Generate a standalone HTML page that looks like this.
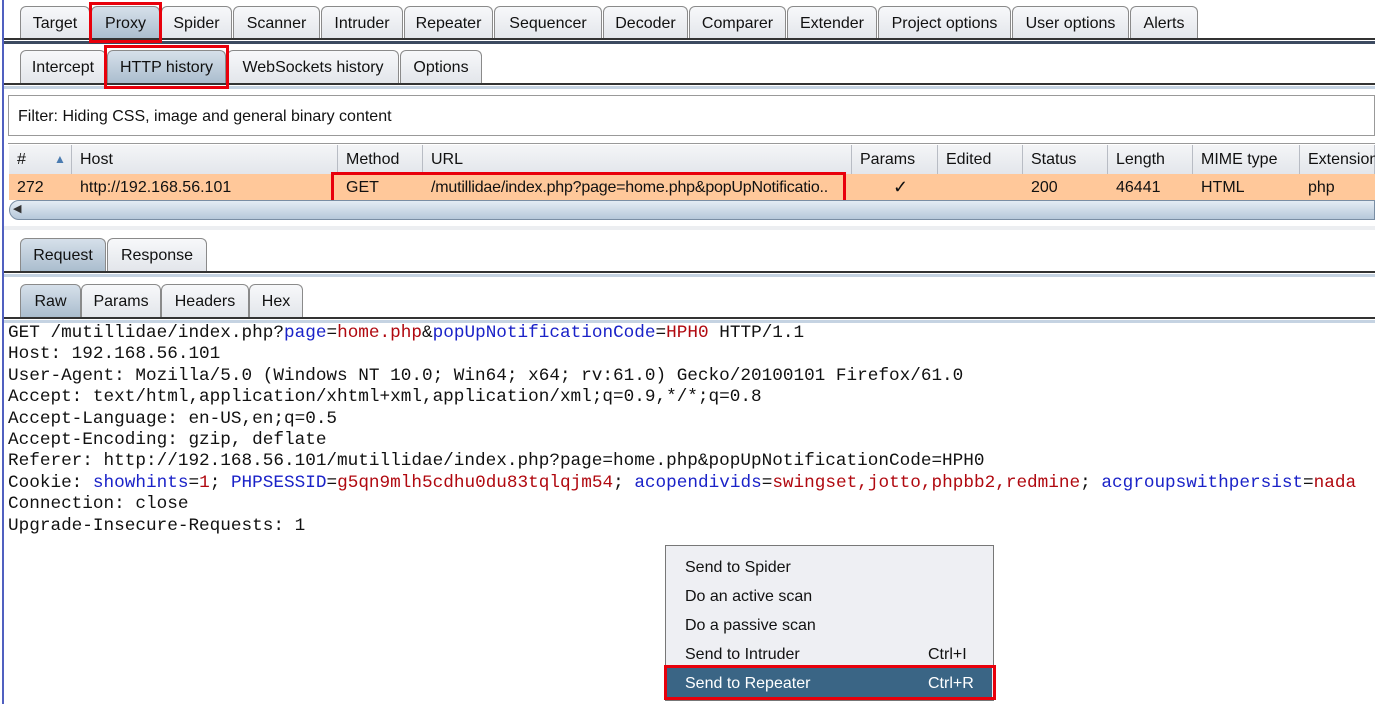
<!DOCTYPE html>
<html><head><style>
body{margin:0;width:1375px;height:704px;background:#fff;position:relative;overflow:hidden;font-family:"Liberation Sans",sans-serif;font-size:16px;color:#111}
.a{position:absolute;box-sizing:border-box}
.tab{position:absolute;box-sizing:border-box;border:1px solid #8a8a8a;border-bottom:none;border-radius:6px 6px 0 0;background:linear-gradient(#f7f8fa,#e2e5ea);text-align:center;line-height:33px}
.sel{background:linear-gradient(#d6e0ea,#a9bccd)}
.red{position:absolute;box-sizing:border-box;border:3px solid #e8000b}
.hd{position:absolute;top:145px;height:29px;line-height:29px;padding-left:8px;box-sizing:border-box;border-right:1px solid #b8bcc4;background:linear-gradient(#f4f5f7,#e3e6eb)}
.rc{position:absolute;top:174px;height:26px;line-height:27px;padding-left:8px;box-sizing:border-box}
.mono{position:absolute;left:8px;top:323px;font-family:"Liberation Mono",monospace;font-size:17.7px;line-height:21.4px;white-space:pre;color:#111}
.b{color:#1a22c8}.r{color:#b0080f}
.mi{position:absolute;left:685px;font-size:16px}
</style></head><body>
<div class="a" style="left:2px;top:0;width:2px;height:704px;background:#5060c0"></div>
<div class="tab" style="left:20px;top:6px;width:70px;height:34px">Target</div>
<div class="tab sel" style="left:91px;top:6px;width:69px;height:34px">Proxy</div>
<div class="tab" style="left:161px;top:6px;width:71px;height:34px">Spider</div>
<div class="tab" style="left:233px;top:6px;width:87px;height:34px">Scanner</div>
<div class="tab" style="left:321px;top:6px;width:82px;height:34px">Intruder</div>
<div class="tab" style="left:404px;top:6px;width:89px;height:34px">Repeater</div>
<div class="tab" style="left:494px;top:6px;width:108px;height:34px">Sequencer</div>
<div class="tab" style="left:603px;top:6px;width:85px;height:34px">Decoder</div>
<div class="tab" style="left:689px;top:6px;width:97px;height:34px">Comparer</div>
<div class="tab" style="left:787px;top:6px;width:90px;height:34px">Extender</div>
<div class="tab" style="left:878px;top:6px;width:133px;height:34px">Project options</div>
<div class="tab" style="left:1012px;top:6px;width:117px;height:34px">User options</div>
<div class="tab" style="left:1130px;top:6px;width:68px;height:34px">Alerts</div>
<div class="a" style="left:4px;top:38px;width:1371px;height:2px;background:#333"></div>
<div class="a" style="left:4px;top:41px;width:1371px;height:3px;background:#3c4a60"></div>
<div class="red" style="left:89px;top:2px;width:73px;height:41px"></div>
<div class="tab" style="left:20px;top:50px;width:86px;height:34px">Intercept</div>
<div class="tab sel" style="left:107px;top:50px;width:119px;height:34px">HTTP history</div>
<div class="tab" style="left:227px;top:50px;width:172px;height:34px">WebSockets history</div>
<div class="tab" style="left:400px;top:50px;width:82px;height:34px">Options</div>
<div class="a" style="left:4px;top:83px;width:1371px;height:2px;background:#333"></div>
<div class="a" style="left:4px;top:86px;width:1371px;height:3px;background:#c5d3e2"></div>
<div class="red" style="left:104px;top:45px;width:125px;height:44px"></div>
<div class="a" style="left:8px;top:95px;width:1367px;height:41px;border:1px solid #999;padding-left:9px;line-height:41px">Filter: Hiding CSS, image and general binary content</div>
<div class="a" style="left:8px;top:143px;width:1367px;height:80px;border-top:1px solid #999"></div>
<div class="hd" style="left:9px;width:63px">#<span style="position:absolute;left:45px;color:#4a7bb0;font-size:12px">▲</span></div>
<div class="hd" style="left:72px;width:266px">Host</div>
<div class="hd" style="left:338px;width:85px">Method</div>
<div class="hd" style="left:423px;width:429px">URL</div>
<div class="hd" style="left:852px;width:86px">Params</div>
<div class="hd" style="left:938px;width:85px">Edited</div>
<div class="hd" style="left:1023px;width:85px">Status</div>
<div class="hd" style="left:1108px;width:85px">Length</div>
<div class="hd" style="left:1193px;width:107px">MIME type</div>
<div class="hd" style="left:1300px;width:75px">Extension</div>
<div class="a" style="left:9px;top:174px;width:1366px;height:26px;background:#ffc89a"></div>
<div class="rc" style="left:9px">272</div>
<div class="rc" style="left:72px">http://192.168.56.101</div>
<div class="rc" style="left:338px">GET</div>
<div class="rc" style="left:423px;width:422px;white-space:nowrap;overflow:hidden;letter-spacing:-0.2px">/mutillidae/index.php?page=home.php&amp;popUpNotificatio..</div>
<div class="rc" style="left:885px;font-size:18px">✓</div>
<div class="rc" style="left:1023px">200</div>
<div class="rc" style="left:1108px">46441</div>
<div class="rc" style="left:1193px">HTML</div>
<div class="rc" style="left:1300px">php</div>
<div class="red" style="left:331px;top:172px;width:515px;height:32px"></div>
<div class="a" style="left:9px;top:200px;width:1366px;height:20px;background:linear-gradient(#e4ecf4,#b6c8da);border-radius:10px 0 0 10px;border:1px solid #7a8ea4"></div>
<div class="a" style="left:13px;top:202px;font-size:11px;color:#333">◀</div>
<div class="a" style="left:4px;top:226px;width:1371px;height:4px;background:#eceef1"></div>
<div class="tab sel" style="left:20px;top:238px;width:86px;height:34px">Request</div>
<div class="tab" style="left:107px;top:238px;width:100px;height:34px">Response</div>
<div class="a" style="left:4px;top:271px;width:1371px;height:2px;background:#333"></div>
<div class="a" style="left:4px;top:274px;width:1371px;height:3px;background:#c5d3e2"></div>
<div class="tab sel" style="left:20px;top:284px;width:61px;height:34px">Raw</div>
<div class="tab" style="left:81px;top:284px;width:80px;height:34px">Params</div>
<div class="tab" style="left:161px;top:284px;width:88px;height:34px">Headers</div>
<div class="tab" style="left:249px;top:284px;width:54px;height:34px">Hex</div>
<div class="a" style="left:4px;top:317px;width:1371px;height:2px;background:#333"></div>
<div class="a" style="left:4px;top:320px;width:1371px;height:3px;background:#c5d3e2"></div>
<div class="mono">GET /mutillidae/index.php?<span class="b">page</span>=<span class="r">home.php</span>&amp;<span class="b">popUpNotificationCode</span>=<span class="r">HPH0</span> HTTP/1.1
Host: 192.168.56.101
User-Agent: Mozilla/5.0 (Windows NT 10.0; Win64; x64; rv:61.0) Gecko/20100101 Firefox/61.0
Accept: text/html,application/xhtml+xml,application/xml;q=0.9,*/*;q=0.8
Accept-Language: en-US,en;q=0.5
Accept-Encoding: gzip, deflate
Referer: http://192.168.56.101/mutillidae/index.php?page=home.php&amp;popUpNotificationCode=HPH0
Cookie: <span class="b">showhints</span>=<span class="r">1</span>; <span class="b">PHPSESSID</span>=<span class="r">g5qn9mlh5cdhu0du83tqlqjm54</span>; <span class="b">acopendivids</span>=<span class="r">swingset,jotto,phpbb2,redmine</span>; <span class="b">acgroupswithpersist</span>=<span class="r">nada</span>
Connection: close
Upgrade-Insecure-Requests: 1</div>
<div class="a" style="left:665px;top:545px;width:329px;height:156px;background:#eeeff3;border:1px solid #777"></div>
<div class="mi" style="top:559px">Send to Spider</div>
<div class="mi" style="top:588px">Do an active scan</div>
<div class="mi" style="top:617px">Do a passive scan</div>
<div class="mi" style="top:646px">Send to Intruder</div>
<div class="mi" style="top:646px;left:928px">Ctrl+I</div>
<div class="a" style="left:667px;top:667px;width:325px;height:30px;background:#3a6585"></div>
<div class="mi" style="top:675px;color:#fff">Send to Repeater</div>
<div class="mi" style="top:675px;left:928px;color:#fff">Ctrl+R</div>
<div class="red" style="left:664px;top:665px;width:332px;height:35px"></div>
</body></html>
